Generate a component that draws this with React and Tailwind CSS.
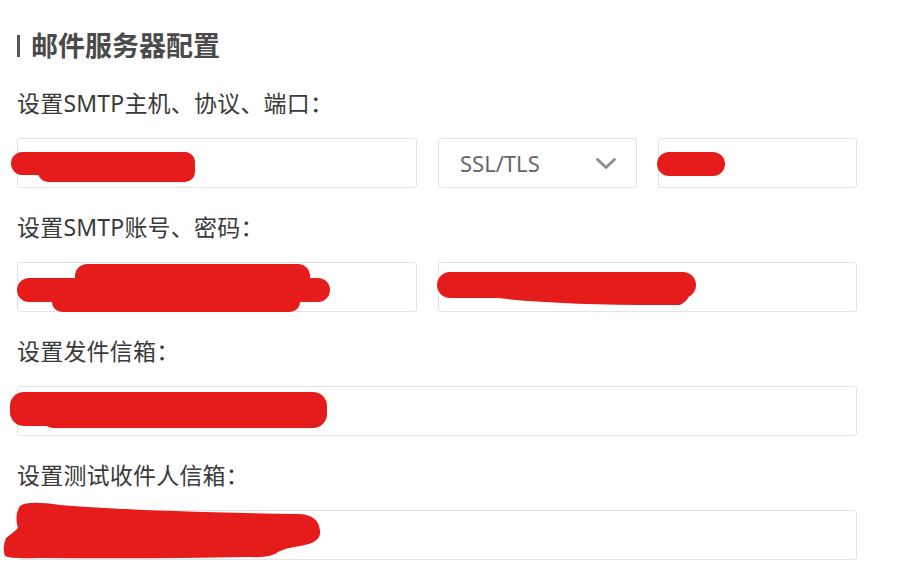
import React from "react";

const font = { fontFamily: '"Noto Sans", "Noto Sans CJK SC", sans-serif' };

function Input({ className = "", children }) {
  return (
    <div className={"h-[50px] border border-[#e3e3e3] rounded-[3px] bg-white " + className}>
      {children}
    </div>
  );
}

function Label({ children }) {
  return (
    <div className="h-[30px] leading-[30px] text-[23px] text-[#3a3a3a] mb-5 tracking-[0.2px]">{children}</div>
  );
}

export default function App() {
  return (
    <div className="relative w-[903px] h-[571px] bg-white overflow-hidden" style={font}>
      <div className="pl-[17px] pt-[30px] w-[857px]">
        <div className="flex items-center h-[32px] mb-[26px]">
          <div className="w-[3px] h-[22px] bg-[#555]" />
          <div className="ml-[11px] text-[27px] font-bold text-[#4a4a4a] leading-[32px]">邮件服务器配置</div>
        </div>

        <Label>设置SMTP主机、协议、端口：</Label>
        <div className="flex gap-[21px] mb-[24px]">
          <Input className="w-[400px]" />
          <Input className="w-[199px] flex items-center justify-between pl-[21px] pr-[19px]">
            <span className="text-[22px] text-[#666]">SSL/TLS</span>
            <svg width="22" height="13" viewBox="0 0 22 13" fill="none">
              <polyline points="2.5,2.5 11,10.5 19.5,2.5" stroke="#8f8f8f" strokeWidth="3" strokeLinecap="round" strokeLinejoin="round" />
            </svg>
          </Input>
          <Input className="w-[199px]" />
        </div>

        <Label>设置SMTP账号、密码：</Label>
        <div className="flex gap-[21px] mb-[24px]">
          <Input className="w-[400px]" />
          <Input className="flex-1" />
        </div>

        <Label>设置发件信箱：</Label>
        <Input className="mb-[24px]" />

        <Label>设置测试收件人信箱：</Label>
        <Input />
      </div>

      <svg className="absolute inset-0 pointer-events-none" width="903" height="571" viewBox="0 0 903 571">
        <g fill="#e61c1c">
          <rect x="11" y="152" width="184" height="23" rx="11.5" />
          <rect x="38" y="152" width="157" height="30" rx="10" />
          <rect x="657" y="152" width="68" height="24" rx="12" />
          <rect x="17" y="278" width="313" height="24" rx="12" />
          <rect x="75" y="264" width="235" height="36" rx="12" />
          <rect x="52" y="288" width="248" height="24" rx="10" />
          <rect x="437" y="272" width="259" height="26" rx="13" />
          <path d="M445 290 Q520 306 680 305 Q690 300 690 290 Z" />
          <rect x="10" y="392" width="300" height="34" rx="14" />
          <rect x="40" y="392" width="287" height="36" rx="14" />
          <path d="M20 506 Q28 500 60 505 Q150 512 300 514 Q318 515 320 530 Q322 543 300 546 Q285 548 278 552 Q272 558 250 557 Q150 559 40 558 Q10 559 5 556 Q2 548 6 538 Q14 532 18 528 Q14 515 20 506 Z" />
        </g>
      </svg>
    </div>
  );
}
